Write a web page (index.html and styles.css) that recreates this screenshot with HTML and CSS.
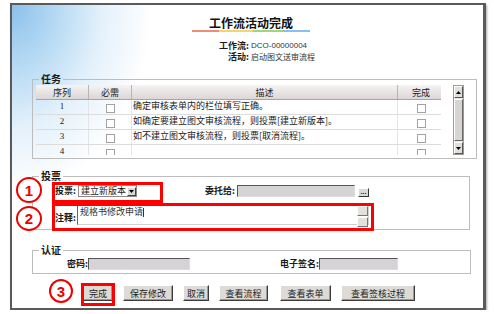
FILE: index.html
```html
<!DOCTYPE html>
<html lang="zh-CN">
<head>
<meta charset="UTF-8" />
<meta name="viewport" content="width=device-width, initial-scale=1" />
<title>工作流活动完成</title>
<link rel="stylesheet" href="styles.css">
</head>
<body>
<div class="window">
  <div class="head">
    <h1 class="title">工作流活动完成</h1>
  </div>
  <div class="info">
    <b>工作流:</b><span class="code">DCO-00000004</span>
    <b>活动:</b><span>启动图文送审流程</span>
  </div>

  <fieldset class="box task">
    <legend>任务</legend>
    <div class="task-body">
      <div class="grid-wrap">
        <table class="grid">
          <thead>
            <tr><th class="c-no">序列</th><th class="c-req">必需</th><th class="c-desc">描述</th><th class="c-done">完成</th></tr>
          </thead>
          <tbody>
            <tr><td class="num">1</td><td><span class="chk"></span></td><td class="desc">确定审核表单内的栏位填写正确。</td><td><span class="chk"></span></td></tr>
            <tr><td class="num">2</td><td><span class="chk"></span></td><td class="desc">如确定要建立图文审核流程，则投票[建立新版本]。</td><td><span class="chk"></span></td></tr>
            <tr><td class="num">3</td><td><span class="chk"></span></td><td class="desc">如不建立图文审核流程，则投票[取消流程]。</td><td><span class="chk"></span></td></tr>
            <tr><td class="num">4</td><td><span class="chk"></span></td><td class="desc"></td><td><span class="chk"></span></td></tr>
          </tbody>
        </table>
      </div>
      <div class="vscroll">
        <span class="sbtn"><svg width="5" height="3" viewBox="0 0 5 3"><polygon points="2.5,0 5,3 0,3" fill="#000"/></svg></span>
        <span class="thumb"></span>
        <span class="sbtn"><svg width="5" height="3" viewBox="0 0 5 3"><polygon points="0,0 5,0 2.5,3" fill="#000"/></svg></span>
      </div>
    </div>
  </fieldset>

  <fieldset class="box vote">
    <legend>投票</legend>
    <div class="vote-row">
      <div class="field">
        <label>投票:</label>
        <span class="select">建立新版本<span class="drop"><svg width="5" height="3" viewBox="0 0 5 3"><polygon points="0,0 5,0 2.5,3" fill="#000"/></svg></span></span>
      </div>
      <div class="field end">
        <label>委托给:</label>
        <span class="input delegate"></span>
        <span class="dots">...</span>
      </div>
    </div>
    <div class="note-row">
      <label>注释:</label>
      <div class="textarea">规格书修改申请<span class="caret"></span>
        <span class="spin"><span class="sp"></span><span class="sp"></span></span>
      </div>
    </div>
  </fieldset>

  <fieldset class="box auth">
    <legend>认证</legend>
    <div class="auth-row">
      <label>密码:</label><span class="input pwd"></span>
      <label class="sig-label">电子签名:</label><span class="input sig"></span>
    </div>
  </fieldset>

  <div class="actions">
    <button class="b30">完成</button>
    <button class="b50">保存修改</button>
    <button class="b26">取消</button>
    <button class="b49">查看流程</button>
    <button class="b51">查看表单</button>
    <button class="b74">查看签核过程</button>
  </div>
</div>

<!-- annotation marks -->
<span class="mark m1">1</span>
<span class="mark m2">2</span>
<span class="mark m3">3</span>
<span class="frame f1"></span>
<span class="frame f2"></span>
<span class="frame f3"></span>
</body>
</html>
```

FILE: styles.css
```css
body { margin:0; position:relative; background:#fff; color:#1a1a1a; font-family:"Noto Sans CJK SC","Liberation Sans",sans-serif; font-size:9px; }

.window { box-sizing:border-box; width:476px; height:307px; margin:3px 0 0 10px; padding-top:11px; border:2px solid #5a5a5a; border-right-width:3px; box-shadow:1px 2px 2px #a8a8a8;
  background:radial-gradient(ellipse 140px 190px at 0 0, #8cc0ea 0, #b3d8f3 30%, #e4f1fb 65%, rgba(255,255,255,0) 100%) no-repeat, #fff; }

.head { padding-left:7px; }
.title { display:table; margin:0 auto; padding:0 17px 1px; font-size:12px; line-height:13px; font-weight:bold; color:#111;
  border-bottom:2px solid #ccc; border-image:linear-gradient(to right, #f28878 0 23%, #f3d56a 23% 52%, #9dd67c 52% 77%, #88bff0 77%) 1; }

.info { display:grid; grid-template-columns:237px auto; column-gap:2px; margin-top:8px; line-height:11px; }
.info b { text-align:right; font-size:9px; }
.info span { font-size:8px; color:#333; }
.info .code { font-family:"Liberation Sans",sans-serif; }

.box { margin:12px 0 0 20px; padding:1px 3px 3px; border:1px solid #bcbcbc; min-width:0; }
.box legend { padding:0 2px; margin-left:3px; font-size:10px; line-height:10px; font-weight:bold; }

.task { width:437px; }
.task-body { display:flex; gap:12px; }
.grid-wrap { width:405px; height:70px; overflow:hidden; }
.grid { width:405px; border-collapse:collapse; table-layout:fixed; }
.grid th { height:14px; padding:0; font-weight:normal; font-size:9px; background:linear-gradient(#f6f3f3, #dcd6d6); border-right:1px solid #b9b3b3; border-bottom:1px solid #a9a3a3; }
.grid .c-no { width:52px; }
.grid .c-req { width:42px; }
.grid .c-desc { width:265px; }
.grid .c-done { width:46px; }
.grid td { height:14px; padding:0; text-align:center; vertical-align:top; border-bottom:1px solid #dcdcdc; border-right:1px solid #e4e4e4; line-height:12px; }
.grid td.num { font-family:"Liberation Serif",serif; font-size:9px; }
.grid td.desc { text-align:left; padding-left:1px; white-space:nowrap; }
.chk { display:inline-block; width:7px; height:7px; margin-top:4px; border:1px solid #a2a2a2; background:#fff; vertical-align:top; }

.vscroll { display:flex; flex-direction:column; width:11px; height:70px; background:#ebebeb; border:1px solid #9a9a9a; box-sizing:border-box; }
.sbtn { display:flex; align-items:center; justify-content:center; height:10px; background:#e2dfdb; border:1px solid; border-color:#fff #555 #555 #fff; }
.thumb { flex:1; margin:1px 0; background:#d8d4d0; border:1px solid; border-color:#fff #666 #666 #fff; max-height:42px; }
.vscroll .sbtn:last-child { margin-top:auto; }

.vote { width:430px; padding:4px 3px 4px; margin-top:12px; }
.vote-row { display:flex; justify-content:space-between; width:314px; height:12px; margin-left:19px; }
.field { display:flex; align-items:center; gap:2px; }
.field.end { align-items:flex-end; }
label { font-weight:bold; font-size:9px; line-height:12px; }
.select { display:flex; align-items:center; box-sizing:border-box; width:59px; height:12px; padding-left:2px; background:#fff; border:1px solid #8a8a8a; line-height:10px; }
.drop { display:flex; align-items:center; justify-content:center; box-sizing:border-box; width:9px; height:9px; margin-left:auto; background:#dcd9d5; border:1px solid; border-color:#fff #444 #444 #fff; }
.input { display:block; box-sizing:border-box; height:12px; background:#d6d3d6; border:1px solid; border-color:#555 #ddd #ddd #555; }
.delegate { width:118px; }
.dots { box-sizing:border-box; width:11px; height:9px; margin-left:1px; background:#dcd9d5; border:1px solid; border-color:#fff #333 #333 #fff; font-size:7px; line-height:5px; text-align:center; font-family:"Liberation Sans",sans-serif; font-weight:bold; }

.note-row { display:flex; align-items:flex-end; gap:1px; margin:8px 0 0 19px; }
.note-row label { padding-bottom:1px; }
.textarea { position:relative; box-sizing:border-box; width:292px; height:20px; padding:0 0 0 2px; background:#fff; border:1px solid #d0d0d0; border-left-color:#666; line-height:11px; color:#333; }
.caret { display:inline-block; width:1px; height:9px; background:#333; vertical-align:middle; }
.spin { position:absolute; top:0; right:0; display:flex; flex-direction:column; gap:1px; }
.sp { width:9px; height:8px; background:#e4e1dd; border:1px solid; border-color:#fff #777 #777 #fff; }

.auth { width:431px; padding:2px 3px 3px; margin-top:15px; }
.auth-row { display:flex; align-items:center; height:13px; padding-left:31px; }
.pwd { width:102px; }
.sig-label { margin-left:90px; }
.sig { width:79px; }

.actions { display:flex; gap:10px; margin:11px 0 0 71px; }
.actions button { box-sizing:border-box; height:16px; padding:0; font-family:inherit; font-size:9px; color:#222; background:#dedad5; border:1px solid; border-color:#fff #3c3c3c #3c3c3c #fff; box-shadow:inset -1px -1px 0 #999; }
.actions .b30 { width:30px; }
.actions .b50 { width:50px; }
.actions .b26 { width:26px; }
.actions .b49 { width:49px; margin-right:2px; }
.actions .b51 { width:51px; }
.actions .b74 { width:74px; }

.mark { position:absolute; box-sizing:border-box; display:flex; align-items:center; justify-content:center; border:2px solid #e00; border-radius:50%; background:#fff; color:#e00; font:bold 15px "Liberation Sans",sans-serif; }
.m1 { left:16px; top:177px; width:26px; height:26px; }
.m2 { left:16px; top:206px; width:26px; height:25px; }
.m3 { left:49px; top:279px; width:24px; height:24px; }
.frame { position:absolute; box-sizing:border-box; border:3px solid #f00; }
.f1 { left:52px; top:182px; width:111px; height:21px; }
.f2 { left:52px; top:203px; width:322px; height:28px; }
.f3 { left:81px; top:283px; width:34px; height:23px; }
```
